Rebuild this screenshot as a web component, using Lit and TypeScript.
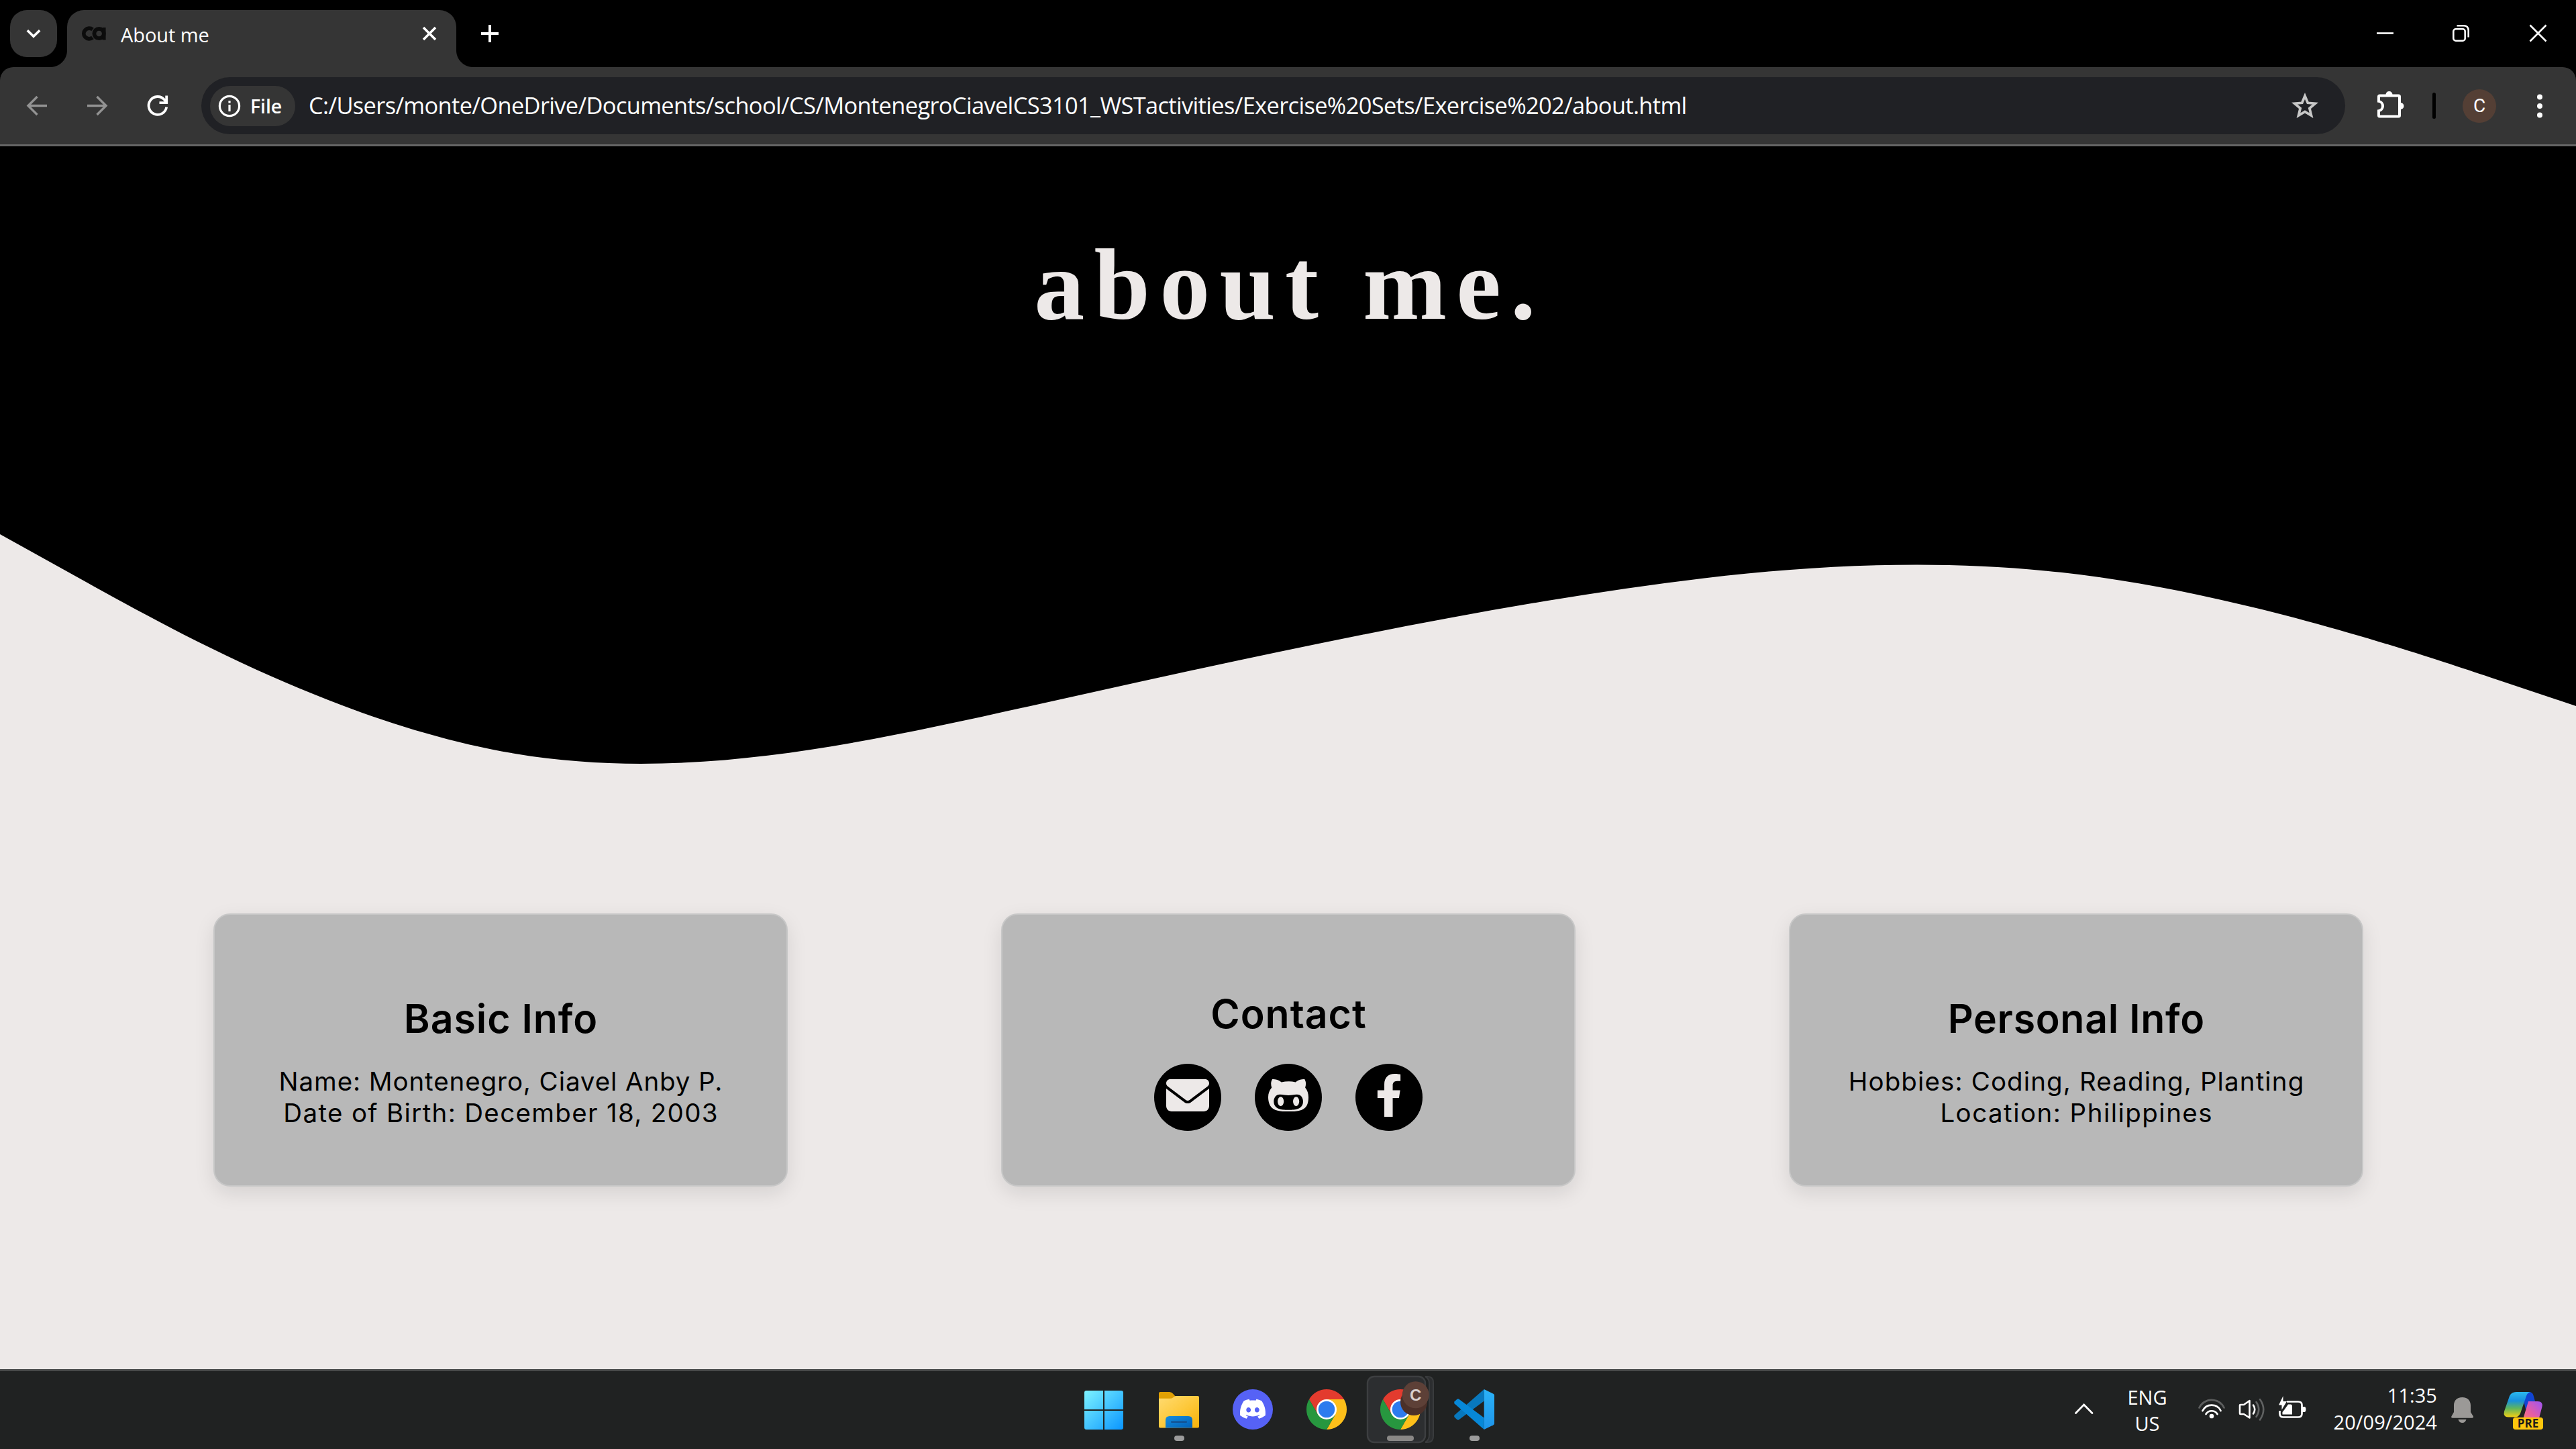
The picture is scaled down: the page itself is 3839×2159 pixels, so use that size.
import { LitElement, html, css, svg } from "lit";
import { customElement } from "lit/decorators.js";
import { styleMap } from "lit/directives/style-map.js";

interface Line {
  text: string;
  tracking: number;
}

interface InfoCard {
  title: Line;
  lines: Line[];
}

const BASIC: InfoCard = {
  title: { text: "Basic Info", tracking: 0.97 },
  lines: [
    { text: "Name: Montenegro, Ciavel Anby P.", tracking: 0.91 },
    { text: "Date of Birth: December 18, 2003", tracking: 1.33 },
  ],
};

const PERSONAL: InfoCard = {
  title: { text: "Personal Info", tracking: 0.67 },
  lines: [
    { text: "Hobbies: Coding, Reading, Planting", tracking: 1.12 },
    { text: "Location: Philippines", tracking: 1.47 },
  ],
};

/* ---------- browser window ---------- */

@customElement("browser-chrome")
class BrowserChrome extends LitElement {
  static styles = css`
    :host {
      display: block;
      height: 218px;
      background: #000;
      color: #fff;
      font-family: "Open Sans", sans-serif;
    }
    svg { display: block; flex: none; }
    .strip { display: flex; height: 100px; padding: 15px 0 0 15px; box-sizing: border-box; }
    .search {
      width: 70px; height: 70px; border-radius: 25px; background: #353535;
      margin-right: 15px;
    }
    .tab {
      position: relative;
      display: flex;
      width: 580px; height: 85px; box-sizing: border-box;
      background: #353535;
      border-radius: 25px 25px 0 0;
      padding-left: 22px;
    }
    .tab::before, .tab::after {
      content: "";
      position: absolute; bottom: 0;
      width: 25px; height: 25px;
    }
    .tab::before { left: -25px; background: radial-gradient(circle at 0 0, transparent 24.5px, #353535 25.5px); }
    .tab::after { right: -25px; background: radial-gradient(circle at 100% 0, transparent 24.5px, #353535 25.5px); }
    .tab-title {
      flex: 1; margin: 17px 0 0 21px;
      font-size: 29px; line-height: 40px; letter-spacing: -0.08px;
    }
    .close { margin-right: 20px; }
    .new { margin-left: 30px; }
    .controls { display: flex; margin-left: auto; }
    .bar {
      display: flex; align-items: center;
      height: 115px; padding-left: 25px; box-sizing: border-box;
      background: #353535; border-radius: 20px 20px 0 0;
    }
    .nav { display: flex; gap: 30px; margin-right: 35px; }
    .omni {
      display: flex; align-items: center;
      width: 3195px; height: 85px; box-sizing: border-box;
      padding: 0 30px 0 13px;
      border-radius: 43px; background: #202125;
    }
    .chip {
      display: flex; align-items: center;
      width: 127px; height: 60px; box-sizing: border-box;
      padding-left: 9px; gap: 11px;
      border-radius: 30px; background: #353535;
      font-size: 28.5px; font-weight: 600; line-height: 40px; letter-spacing: -0.1px;
    }
    .url {
      flex: 1; margin: -1px 0 0 20px; white-space: nowrap;
      font-size: 34.4px; line-height: 46px; letter-spacing: -0.64px;
    }
    .actions { display: flex; align-items: center; }
    .divider { width: 5px; height: 39px; border-radius: 3px; background: #000; margin: 0 40px 0 37px; }
    .avatar {
      display: grid; place-items: center;
      width: 50px; height: 50px; border-radius: 50%;
      background: #543f35;
      font: 28px/50px Roboto, sans-serif;
    }
    .line { height: 3px; background: #656565; }
  `;

  render() {
    return html`
      <div class="strip">
        <div class="search">
          <svg width="70" height="70" viewBox="15 15 70 70" fill="none" stroke="#fff" stroke-width="3.6">
            <path d="M40.8 45.2 50 54.2 59.2 45.2" />
          </svg>
        </div>
        <div class="tab">
          <svg width="37" height="70" viewBox="122 15 37 70" fill="none" stroke="#0c0c0c" stroke-width="5.8">
            <path d="M138 44A8 7.8 0 1 0 138 56" />
            <circle cx="147.6" cy="50" r="7.2" />
            <path d="M155.2 41V59.5" stroke-width="4.8" />
          </svg>
          <span class="tab-title">About me</span>
          <svg class="close" width="40" height="70" viewBox="620 15 40 70" fill="none" stroke="#fff" stroke-width="3.6">
            <path d="M631 41 649 59M649 41 631 59" />
          </svg>
        </div>
        <svg class="new" width="40" height="70" viewBox="710 15 40 70" stroke="#fff" stroke-width="4">
          <path d="M717 50H743M730 37V63" />
        </svg>
        <div class="controls">
          <svg width="344" height="70" viewBox="3495 15 344 70" fill="none" stroke="#fff" stroke-width="2.6">
            <path d="M3542 49.5H3567" />
            <rect x="3656.3" y="43.3" width="17.4" height="17.4" rx="3.5" />
            <path d="M3661.5 38.3H3671.5Q3678.7 38.3 3678.7 45.5V55.5" />
            <path d="M3770.5 37.5 3794.5 61.5M3794.5 37.5 3770.5 61.5" />
          </svg>
        </div>
      </div>
      <div class="bar">
        <div class="nav">
          <svg width="60" height="60" viewBox="25 128 60 60" fill="none" stroke="#929292" stroke-width="3.4">
            <path d="M70 157.5H42M55.5 144 42 157.5 55.5 171" />
          </svg>
          <svg width="60" height="60" viewBox="115 128 60 60" fill="none" stroke="#929292" stroke-width="3.4">
            <path d="M130 157.5H158M144.5 144 158 157.5 144.5 171" />
          </svg>
          <svg width="60" height="60" viewBox="205 128 60 60" fill="none" stroke="#fff" stroke-width="3.8">
            <path d="M248.2 159.5A13.4 13.4 0 1 1 245 148.5L247.5 151.5M248.2 142.5V153.2H237.5" />
          </svg>
        </div>
        <div class="omni">
          <div class="chip">
            <svg width="40" height="40" viewBox="322.5 137.5 40 40" fill="none" stroke="#fff" stroke-width="3.2">
              <circle cx="342.5" cy="157.5" r="14.6" />
              <path d="M342.5 155.5V165.5M342.5 149.6V153" />
            </svg>
            <span>File</span>
          </div>
          <span class="url">C:/Users/monte/OneDrive/Documents/school/CS/MontenegroCiavelCS3101_WSTactivities/Exercise%20Sets/Exercise%202/about.html</span>
          <svg width="60" height="60" viewBox="3405 127.5 60 60" fill="none" stroke="#c7c7c7" stroke-width="3.8">
            <path d="M3435 142.5 3439.3 152.8 3450.3 153.7 3441.9 160.9 3444.5 171.6 3435 165.9 3425.5 171.6 3428.1 160.9 3419.7 153.7 3430.7 152.8Z" />
          </svg>
        </div>
        <div class="actions">
          <svg width="93" height="70" viewBox="3495 122.5 93 70" fill="none" stroke="#fff" stroke-width="4">
            <path d="M3547.5 142H3574.5Q3576 142 3576 143.5V171.5Q3576 173 3574.5 173H3546.5Q3545 173 3545 171.5V164.6A7.2 7.2 0 0 0 3545 150.4V143.5Q3545 142 3546.5 142Z" />
            <path d="M3555.5 140.5A5 5 0 0 1 3565.5 140.5ZM3577.5 152.5A5 5 0 0 1 3577.5 162.5Z" fill="#fff" stroke="none" />
          </svg>
          <div class="divider"></div>
          <div class="avatar">C</div>
          <svg width="119" height="70" viewBox="3720 122.5 119 70" fill="#fff">
            <circle cx="3785" cy="144" r="4" />
            <circle cx="3785" cy="157.5" r="4" />
            <circle cx="3785" cy="171" r="4" />
          </svg>
        </div>
      </div>
      <div class="line"></div>
    `;
  }
}

/* ---------- web page ---------- */

@customElement("about-page")
class AboutPage extends LitElement {
  static styles = css`
    :host {
      display: flex; flex-direction: column;
      height: 1822px;
      background: #ede9e8;
      color: #000;
      font-family: Inter, sans-serif;
    }
    .hero {
      height: 578px; box-sizing: border-box; padding: 131px 0 0 5px;
      background: #000; color: #ede9e8; text-align: center;
    }
    h1 {
      margin: 0;
      font: bold 150px/150px "Liberation Serif", serif;
      letter-spacing: 14.22px;
    }
    .wave { display: block; width: 3839px; height: 426.5px; }
    .cards {
      display: grid; grid-template-columns: repeat(3, 856px); column-gap: 318px;
      padding: 138.5px 0 0 318px;
    }
    .card {
      display: flex; flex-direction: column; align-items: center;
      height: 407px; box-sizing: border-box; padding-top: 120px;
      border: 2px solid #c7c7c7; border-radius: 25px;
      background: #b8b8b8;
      box-shadow: 0 10px 30px rgba(0, 0, 0, 0.1);
    }
    h2 { margin: 0 0 35px; font-size: 59px; font-weight: 600; line-height: 70px; }
    .row { font-size: 38.5px; line-height: 47px; white-space: nowrap; }
    .contact { padding-top: 113px; }
    .contact h2 { margin-bottom: 39px; }
    .links { display: flex; gap: 50px; }
    .link {
      display: grid; place-items: center;
      width: 100px; height: 100px; border-radius: 50%; background: #000;
    }
  `;

  private track(l: Line) {
    return styleMap({ letterSpacing: `${l.tracking}px`, textIndent: `${l.tracking}px` });
  }

  private card(c: InfoCard) {
    return html`
      <section class="card">
        <h2 style=${this.track(c.title)}>${c.title.text}</h2>
        ${c.lines.map((l) => html`<div class="row" style=${this.track(l)}>${l.text}</div>`)}
      </section>
    `;
  }

  render() {
    return html`
      <header class="hero"><h1>about me.</h1></header>
      <svg class="wave" viewBox="0 0 1440 160" preserveAspectRatio="none">
        <path
          d="M0 0L48 26.67C96 53.33 192 106.67 288 122.67C384 138.67 480 117.33 576 96C672 74.67 768 53.33 864 37.33C960 21.33 1056 10.67 1152 21.33C1248 32 1344 64 1392 80L1440 96V-1H0Z"
        />
      </svg>
      <div class="cards">
        ${this.card(BASIC)}
        <section class="card contact">
          <h2 style=${this.track({ text: "Contact", tracking: 0.97 })}>Contact</h2>
          <div class="links">
            <span class="link">
              <svg width="64" height="64" viewBox="0 0 512 512" fill="#ede9e8" transform="translate(0 -3)">
                <path d="M48 64C21.5 64 0 85.5 0 112c0 15.1 7.1 29.3 19.2 38.4L236.8 313.6c11.4 8.5 27 8.5 38.4 0L492.8 150.4c12.1-9.1 19.2-23.3 19.2-38.4c0-26.5-21.5-48-48-48H48zM0 176V384c0 35.3 28.7 64 64 64H448c35.3 0 64-28.7 64-64V176L294.4 339.2c-22.8 17.1-54 17.1-76.8 0L0 176z" />
              </svg>
            </span>
            <span class="link">
              <svg width="62" height="64" viewBox="-8 0 496 512" fill="#ede9e8" transform="translate(0 -3)">
                <path d="M186.1 328.7c0 20.9-10.9 55.1-36.7 55.1s-36.7-34.2-36.7-55.1 10.9-55.1 36.7-55.1 36.7 34.2 36.7 55.1zM480 278.2c0 31.9-3.2 65.7-17.5 95-37.9 76.6-142.1 74.8-216.7 74.8-75.8 0-186.2 2.7-225.6-74.8-14.6-29-20.2-63.1-20.2-95 0-41.9 13.9-81.5 41.5-113.6-5.2-15.8-7.7-32.4-7.7-48.8 0-21.5 4.9-32.3 14.6-51.8 45.3 0 74.3 9 108.8 36 29-6.9 58.8-10 88.7-10 27 0 54.2 2.9 80.4 9.2 34-26.7 63-35.2 107.8-35.2 9.8 19.5 14.6 30.3 14.6 51.8 0 16.4-2.6 32.7-7.7 48.2 27.5 32.4 39 72.3 39 114.2zm-64.3 50.5c0-43.9-26.7-82.6-73.5-82.6-18.9 0-37 3.4-56 6-14.9 2.3-29.8 3.2-45.1 3.2-15.2 0-30.1-.9-45.1-3.2-18.7-2.6-37-6-56-6-46.8 0-73.5 38.7-73.5 82.6 0 87.8 80.4 101.3 150.4 101.3h48.2c70.3 0 150.6-13.4 150.6-101.3zm-82.6-55.1c-25.8 0-36.7 34.2-36.7 55.1s10.9 55.1 36.7 55.1 36.7-34.2 36.7-55.1-10.9-55.1-36.7-55.1z" />
              </svg>
            </span>
            <span class="link">
              <svg width="40" height="64" viewBox="0 0 320 512" fill="#ede9e8" transform="translate(0 -3)">
                <path d="M279.14 288l14.22-92.66h-88.91v-60.13c0-25.35 12.42-50.06 52.24-50.06h40.42V6.26S260.43 0 225.36 0c-73.22 0-121.08 44.38-121.08 124.72v70.62H22.89V288h81.39v224h100.17V288z" />
              </svg>
            </span>
          </div>
        </section>
        ${this.card(PERSONAL)}
      </div>
    `;
  }
}

/* ---------- taskbar ---------- */

const chromeMark = svg`
  <g transform="translate(55 60)">
    <path fill="#e33b2e" d="M0-15H26A30 30 0 0 0-26-15L-13 7.5Z" />
    <path fill="#fdbf1a" d="M0-15H26A30 30 0 0 1 0 30L13 7.5Z" />
    <path fill="#27973f" d="M-26-15A30 30 0 0 0 0 30L13 7.5H-13Z" />
    <circle r="15" fill="#fff" />
    <circle r="12.3" fill="#2c7bee" />
  </g>`;

@customElement("task-bar")
class TaskBar extends LitElement {
  static styles = css`
    :host {
      display: flex;
      height: 119px; box-sizing: border-box; padding-left: 1592px;
      background: linear-gradient(#474949 3px, #202222 3px);
      color: #fff;
      font: 29px/39px "Open Sans", sans-serif;
    }
    svg { display: block; flex: none; }
    .apps { display: flex; }
    .tray { display: flex; margin-left: auto; padding-right: 44px; }
    .lang { width: 70px; margin: 21.5px 35px 0; text-align: center; }
    .status { display: flex; gap: 10px; }
    .clock {
      width: 182px; margin: 18.5px 18px 0 10px;
      text-align: right; line-height: 40px;
      letter-spacing: 0.05px;
    }
    .copilot { margin-left: 35px; }
    .badge-letter { font: bold 24px "Liberation Sans", sans-serif; }
    .pre { font: bold 17px "Open Sans", sans-serif; }
  `;

  render() {
    return html`
      <div class="apps">
        <svg width="110" height="119" viewBox="0 0 110 119">
          <defs>
            <linearGradient id="win" gradientUnits="userSpaceOnUse" x1="24" y1="32" x2="82" y2="90">
              <stop offset="0" stop-color="#7df3ff" /><stop offset="1" stop-color="#0a96ff" />
            </linearGradient>
          </defs>
          <path fill="url(#win)" d="M27 32H52V60H24V35Q24 32 27 32ZM54 32H79Q82 32 82 35V60H54ZM24 62H52V90H27Q24 90 24 87ZM54 62H82V87Q82 90 79 90H54Z" />
        </svg>
        <svg width="110" height="119" viewBox="0 0 110 119">
          <defs>
            <linearGradient id="fold" x1="0" y1="0" x2="1" y2="1">
              <stop offset="0" stop-color="#ffdb72" /><stop offset="0.5" stop-color="#fdc93c" /><stop offset="1" stop-color="#f8b20a" />
            </linearGradient>
            <linearGradient id="pocket" x1="0" y1="0" x2="1" y2="1">
              <stop offset="0" stop-color="#168ddd" /><stop offset="1" stop-color="#0160b8" />
            </linearGradient>
          </defs>
          <path fill="#e0a004" d="M25 36Q25 34 27 34H41Q44 34 46 36.500L50 41V50H25Z" />
          <path fill="url(#fold)" d="M25 43.700H42Q44.500 43.700 46 42.500L48 41Q49 40 51 40H83Q85 40 85 42V85.500Q85 87.500 83 87.500H27Q25 87.500 25 85.500Z" />
          <path fill="url(#pocket)" d="M35 87.500V76Q35 70 41 70H69Q75 70 75 76V87.500Z" />
          <rect x="43" y="77.700" width="24" height="2" rx="1" fill="#144a86" />
          <rect x="48" y="99" width="15" height="8" rx="4" fill="#9c9c9c" />
        </svg>
        <svg width="110" height="119" viewBox="0 0 110 119">
          <circle cx="55" cy="60" r="30" fill="#5662f6" />
          <path fill="#fff" transform="translate(36 40.300) scale(1.583)" d="M20.317 4.3698a19.7913 19.7913 0 00-4.8851-1.5152.0741.0741 0 00-.0785.0371c-.211.3753-.4447.8648-.6083 1.2495-1.8447-.2762-3.68-.2762-5.4868 0-.1636-.3933-.4058-.8742-.6177-1.2495a.077.077 0 00-.0785-.037 19.7363 19.7363 0 00-4.8852 1.515.0699.0699 0 00-.0321.0277C.5334 9.0458-.319 13.5799.0992 18.0578a.0824.0824 0 00.0312.0561c2.0528 1.5076 4.0413 2.4228 5.9929 3.0294a.0777.0777 0 00.0842-.0276c.4616-.6304.8731-1.2952 1.226-1.9942a.076.076 0 00-.0416-.1057c-.6528-.2476-1.2743-.5495-1.8722-.8923a.077.077 0 01-.0076-.1277c.1258-.0943.2517-.1923.3718-.2914a.0743.0743 0 01.0776-.0105c3.9278 1.7933 8.18 1.7933 12.0614 0a.0739.0739 0 01.0785.0095c.1202.099.246.1981.3728.2924a.077.077 0 01-.0066.1276 12.2986 12.2986 0 01-1.873.8914.0766.0766 0 00-.0407.1067c.3604.698.7719 1.3628 1.225 1.9932a.076.076 0 00.0842.0286c1.961-.6067 3.9495-1.5219 6.0023-3.0294a.077.077 0 00.0313-.0552c.5004-5.177-.8382-9.6739-3.5485-13.6604a.061.061 0 00-.0312-.0286zM8.02 15.3312c-1.1825 0-2.1569-1.0857-2.1569-2.419 0-1.3332.9555-2.4189 2.157-2.4189 1.2108 0 2.1757 1.0952 2.1568 2.419 0 1.3332-.9555 2.4189-2.1569 2.4189zm7.9748 0c-1.1825 0-2.1569-1.0857-2.1569-2.419 0-1.3332.9554-2.4189 2.1569-2.4189 1.2108 0 2.1757 1.0952 2.1568 2.419 0 1.3332-.946 2.4189-2.1568 2.4189Z" />
        </svg>
        <svg width="110" height="119" viewBox="0 0 110 119">${chromeMark}</svg>
        <svg width="110" height="119" viewBox="0 0 110 119">
          <path fill="#2c2e30" stroke="#393b3d" stroke-width="2" d="M92 11H95Q104 11 104 20V100Q104 109 95 109H92Q98 106 98 98V22Q98 14 92 11Z" />
          <rect x="6" y="11" width="86" height="98" rx="10" fill="#2c2e30" stroke="#3d3f41" stroke-width="2.400" />
          ${chromeMark}
          <circle cx="75" cy="49" r="20" fill="#4b3029" />
          <circle cx="77.700" cy="38.300" r="20" fill="#5d4037" />
          <text class="badge-letter" x="77.700" y="47" text-anchor="middle" fill="#d9d0cd">C</text>
          <rect x="35" y="99" width="40" height="8" rx="4" fill="#8a8886" />
        </svg>
        <svg width="110" height="119" viewBox="0 0 110 119">
          <defs>
            <linearGradient id="vs" x1="0" y1="0" x2="0" y2="1">
              <stop offset="0" stop-color="#2bb3f8" /><stop offset="1" stop-color="#1e95ea" />
            </linearGradient>
          </defs>
          <g transform="translate(25 30)">
            <path fill="#0878bd" d="M44.700 0 .7 38.500Q-.6 40 .7 41.800L4.500 45.300Q5.700 46.200 7 45.400L44.700 17.500Z" />
            <path fill="#0788d8" d="M44.700 60 .7 21.500Q-.6 20 .7 18.200L4.500 14.700Q5.700 13.800 7 14.600L44.700 42.500Z" />
            <path fill="url(#vs)" d="M44.700 0 58.500 6.700Q60 7.500 60 9V51Q60 52.500 58.500 53.300L44.700 60Z" />
          </g>
          <rect x="48" y="99" width="15" height="8" rx="4" fill="#9c9c9c" />
        </svg>
      </div>
      <div class="tray">
        <svg width="50" height="119" viewBox="3080 2040 50 119" fill="none" stroke="#fff" stroke-width="2.8" stroke-linecap="round">
          <path d="M3093.500 2105.500 3105.700 2093 3118 2105.500" />
        </svg>
        <div class="lang">ENG<br />US</div>
        <div class="status">
          <svg width="50" height="119" viewBox="3270 2040 50 119" fill="none" stroke="#fff" stroke-width="2.700" stroke-linecap="round">
            <path stroke="#5c5e5e" d="M3277.500 2097.500A20.500 20.500 0 0 1 3314.500 2097.500" />
            <path d="M3282.500 2102A15 15 0 0 1 3309.500 2102M3287.500 2107A10 10 0 0 1 3304.500 2107" />
            <circle cx="3296" cy="2110" r="2" fill="#fff" />
          </svg>
          <svg width="50" height="119" viewBox="3330 2040 50 119" fill="none" stroke="#fff" stroke-width="2.600" stroke-linecap="round" stroke-linejoin="round">
            <path d="M3338 2094Q3338 2093 3339 2093H3344L3352.500 2087V2112.500L3344 2107H3339Q3338 2107 3338 2106Z" />
            <path d="M3358 2093.500Q3362.500 2100 3358 2106.500" />
            <path stroke="#606262" d="M3362.500 2089Q3370 2100 3362.500 2111M3368 2085Q3378.500 2100 3368 2115.500" />
          </svg>
          <svg width="50" height="119" viewBox="3390 2040 50 119" fill="none" stroke="#fff" stroke-width="2.700">
            <path d="M3408 2088.500H3425Q3430.500 2088.500 3430.500 2093.500V2106.500Q3430.500 2111.500 3425 2111.500H3402.500Q3397.500 2111.500 3397.500 2106.500V2102" />
            <path stroke="none" fill="#fff" d="M3431 2096H3434Q3436.500 2096 3436.500 2100T3434 2104H3431ZM3410 2092.500H3414Q3416 2092.500 3416 2095V2107.500H3401.500V2104L3404 2101ZM3402.500 2080V2088H3408L3400.500 2100.500V2093.500H3396Z" />
          </svg>
        </div>
        <div class="clock">11:35<br />20/09/2024</div>
        <svg width="40" height="119" viewBox="3650 2040 40 119" fill="#9b9997">
          <path d="M3669.500 2082C3661 2082 3657 2087.500 3657 2094V2104L3653.300 2110.500Q3652.700 2112.700 3655 2112.700H3684Q3686.500 2112.700 3686 2110.500L3682 2104V2094C3682 2087.500 3678 2082 3669.500 2082Z" />
          <path d="M3663.500 2115H3675.500Q3674 2120 3669.500 2120T3663.500 2115Z" />
        </svg>
        <svg class="copilot" width="70" height="119" viewBox="3725 2040 70 119">
          <defs>
            <linearGradient id="cpa" x1="0" y1="0" x2="0" y2="1">
              <stop offset="0" stop-color="#2bb9ee" /><stop offset="0.350" stop-color="#1890dd" /><stop offset="0.650" stop-color="#5fb55c" /><stop offset="1" stop-color="#f2cf14" />
            </linearGradient>
            <linearGradient id="cpb" x1="1" y1="0" x2="0" y2="1">
              <stop offset="0" stop-color="#9f55f5" /><stop offset="0.500" stop-color="#e75da3" /><stop offset="1" stop-color="#fb8a5d" />
            </linearGradient>
          </defs>
          <path fill="#1145d2" d="M3758 2074H3769Q3774 2074 3775.500 2079L3778 2088Q3771 2087 3768 2092L3764 2100Z" />
          <path fill="url(#cpb)" d="M3768 2088H3782Q3790 2088 3788.500 2096L3784.500 2111Q3783 2117 3777 2119L3755 2123 3759 2118Z" />
          <path fill="#f9804f" d="M3752 2120 3757 2112H3763L3758 2124Z" />
          <path fill="url(#cpa)" d="M3750 2074H3771Q3766.500 2075 3765 2080L3756 2106Q3753.500 2111.500 3748 2111.500H3738Q3730 2111.500 3732 2103L3740 2080Q3742.500 2074 3750 2074Z" />
          <rect x="3745" y="2112" width="45" height="18" rx="4" fill="#fdc60d" />
          <text class="pre" x="3767.500" y="2127.300" text-anchor="middle" fill="#1b1a19">PRE</text>
        </svg>
      </div>
    `;
  }
}

@customElement("app-root")
class AppRoot extends LitElement {
  static styles = css`
    :host {
      display: block;
      width: 3839px; height: 2159px;
      overflow: hidden;
    }
  `;

  render() {
    return html`
      <browser-chrome></browser-chrome>
      <about-page></about-page>
      <task-bar></task-bar>
    `;
  }
}
